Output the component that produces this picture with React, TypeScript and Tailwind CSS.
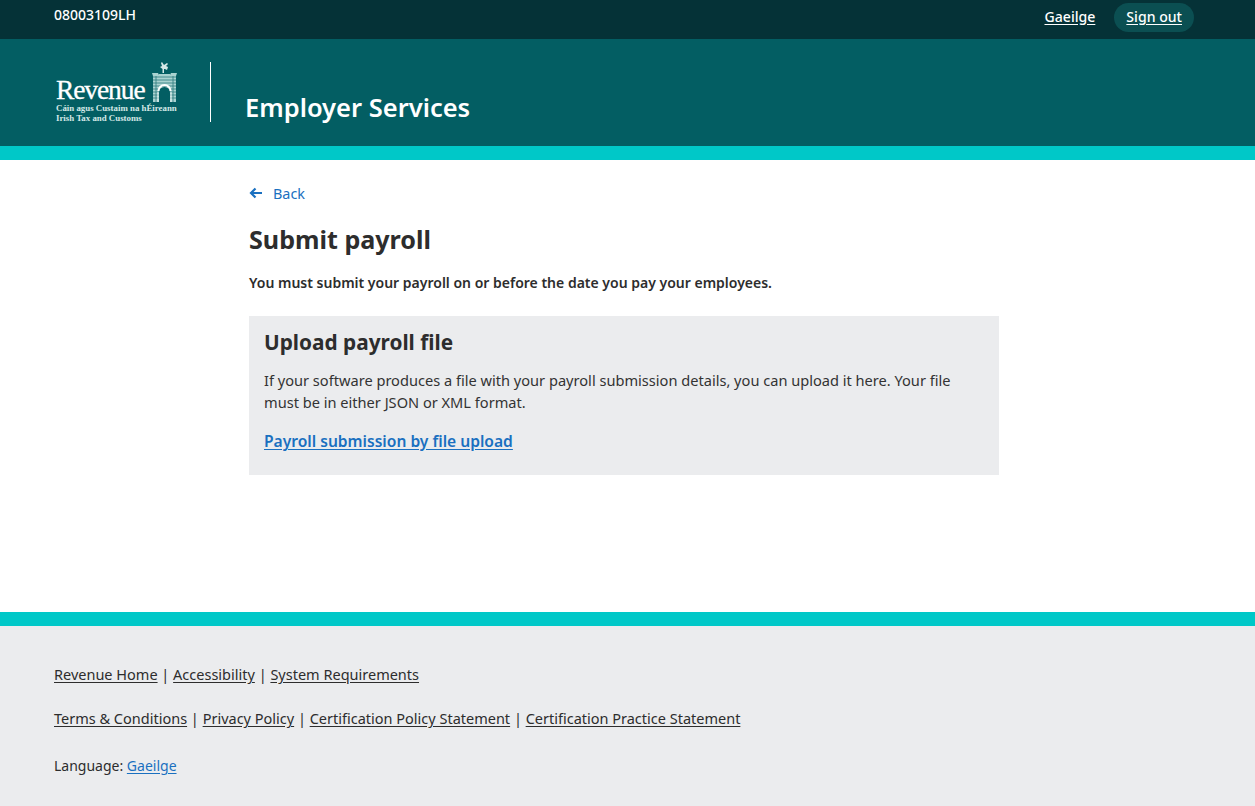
import React from "react";

function Castle() {
  return (
    <svg width="27" height="41" viewBox="0 0 27 41" className="block" aria-hidden="true">
      <path d="M11 0l2 3 3-2 1 1-2 2 2 1-1 3-2-1-1 0 0 4h-1.500V7L9 5l2-1-1-3z" fill="#d5e9e8" />
      <path d="M8 12h11l1 4H7z" fill="#a9d2d0" />
      <path d="M1 11h6l1 2v3h11v-3l1-2h6l-1 3v26H2V14z" fill="#a9d2d0" />
      <g stroke="#035e63" strokeWidth="0.8" fill="none" opacity="0.75">
        <path d="M2 15h23M2 18h23M2 21h23M2 24h23M2 27h23M2 30h23M2 33h23M2 36h23" />
        <path d="M5 14v26M22 14v26" />
      </g>
      <path d="M8 40V30.500a5.500 5.500 0 0 1 11 0V40z" fill="#035e63" />
      <path d="M7.500 29a6 6 0 0 1 12 0" stroke="#fff" strokeWidth="1.800" fill="none" />
      <path d="M7 40V30M20 40V30" stroke="#e6f3f2" strokeWidth="1" />
    </svg>
  );
}

function Logo() {
  return (
    <div className="relative w-[122px] h-[62px] font-['Liberation_Serif',serif] text-white">
      <div className="absolute right-0 top-0"><Castle /></div>
      <div className="absolute left-0 top-[13px] text-[27.500px] leading-[30px] tracking-[-1.100px] [-webkit-text-stroke:0.3px_white]">Revenue</div>
      <div className="absolute left-0 top-[41px] text-[8.850px] leading-[10px] font-semibold text-[#d5e9e8] whitespace-nowrap">Cáin agus Custaim na hÉireann</div>
      <div className="absolute left-0 top-[51px] text-[8.850px] leading-[10px] font-semibold text-[#d5e9e8] whitespace-nowrap">Irish Tax and Customs</div>
    </div>
  );
}

export default function App() {
  const link = "underline underline-offset-2";
  return (
    <div className="font-['Noto_Sans',sans-serif] text-[#2d2d2d] min-h-[806px] bg-white flex flex-col">
      <div className="h-[39px] bg-[#053237] flex items-start justify-between pl-[54px] pr-[61px] text-white">
        <div className="text-[14px] leading-[30px] font-medium">08003109LH</div>
        <div className="flex items-center gap-[19px] pt-[3px] text-[14.100px] font-medium">
          <a className={`${link} -mt-[2px]`}>Gaeilge</a>
          <a className={`${link} h-[29px] leading-[27px] px-[12px] rounded-full bg-[#0b4f52]`}>Sign out</a>
        </div>
      </div>
      <div className="h-[107px] bg-[#035e63] flex pl-[56px] pt-[23px]">
        <Logo />
        <div className="w-px h-[60px] bg-white ml-[32px]" />
        <div className="ml-[34px] mt-[27px] text-[25.500px] leading-[36px] font-semibold text-white">Employer Services</div>
      </div>
      <div className="h-[14px] bg-[#00c8c8]" />
      <main className="h-[452px] pl-[249px] pt-[24px]">
        <div className="w-[750px]">
          <a className="flex items-center text-[14.400px] leading-[20px] text-[#1a70c0]">
            <svg width="14" height="12" viewBox="0 0 14 12" className="mt-[-3px]" fill="none" stroke="currentColor" strokeWidth="2.200">
              <path d="M13 6H2M6.500 1.500L2 6l4.500 4.500" />
            </svg>
            <span className="ml-[10px]">Back</span>
          </a>
          <h1 className="mt-[16px] text-[25.100px] leading-[38px] font-bold">Submit payroll</h1>
          <p className="mt-[14px] text-[14px] leading-[22px] font-semibold">You must submit your payroll on or before the date you pay your employees.</p>
          <section className="mt-[22px] h-[159px] bg-[#ebecee] pl-[15px] pr-[30px] pt-[11px]">
            <h2 className="text-[20.800px] leading-[30px] font-bold">Upload payroll file</h2>
            <p className="mt-[12px] text-[14.600px] leading-[22px] text-[#333]">If your software produces a file with your payroll submission details, you can upload it here. Your file must be in either JSON or XML format.</p>
            <a className={`${link} block mt-[17px] text-[15.600px] leading-[22px] font-semibold text-[#1a70c0]`}>Payroll submission by file upload</a>
          </section>
        </div>
      </main>
      <div className="h-[14px] bg-[#00c8c8]" />
      <footer className="h-[180px] bg-[#ebecee] pl-[54px] pt-[37px] text-[14.500px] leading-[22px]">
        <div>
          <a className={link}>Revenue Home</a> | <a className={link}>Accessibility</a> | <a className={link}>System Requirements</a>
        </div>
        <div className="mt-[22px]">
          <a className={link}>Terms &amp; Conditions</a> | <a className={link}>Privacy Policy</a> | <a className={link}>Certification Policy Statement</a> | <a className={link}>Certification Practice Statement</a>
        </div>
        <div className="mt-[26px] text-[14px]">
          Language: <a className={`${link} text-[#1a70c0]`}>Gaeilge</a>
        </div>
      </footer>
    </div>
  );
}
